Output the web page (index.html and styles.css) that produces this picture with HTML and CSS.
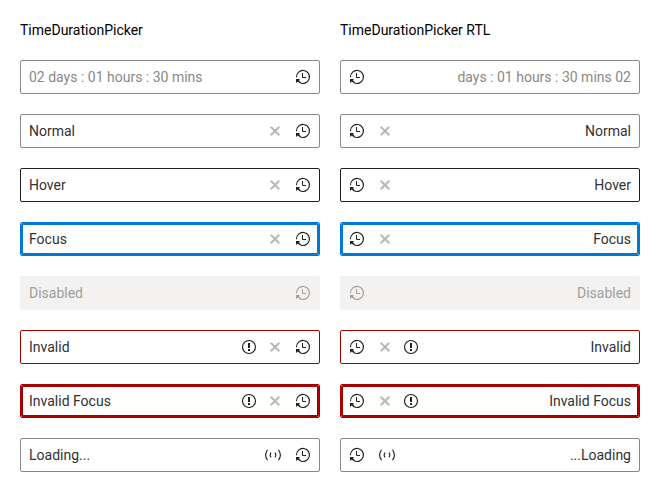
FILE: index.html
```
<!DOCTYPE html>
<html lang="en">
<head>
<meta charset="utf-8">
<title>TimeDurationPicker</title>
<link rel="stylesheet" href="styles.css">
</head>
<body>
<svg class="sprite" aria-hidden="true">
  <symbol id="clock" viewBox="0 0 16 16">
    <path d="M1.500 8.300A6.500 6.500 0 1 1 4.600 13.500" fill="none" stroke="currentColor" stroke-width="1.150"/>
    <path d="M7.500 4v4.500H11" fill="none" stroke="currentColor" stroke-width="1"/>
    <path d="M1 10h4L3.900 11.300 5.600 13 4.700 14 2.700 12.400 1 14z" fill="currentColor"/>
  </symbol>
  <symbol id="clear" viewBox="0 0 16 16">
    <path d="M3.700 3.700l8.600 8.600M12.300 3.700l-8.600 8.600" fill="none" stroke="currentColor" stroke-width="2"/>
  </symbol>
  <symbol id="alert" viewBox="0 0 16 16">
    <circle cx="8" cy="8" r="6.500" fill="none" stroke="currentColor" stroke-width="1.150"/>
    <path d="M7 4h2v5H7zM7 10h2v2H7z" fill="currentColor"/>
  </symbol>
  <symbol id="loading" viewBox="0 0 16 16">
    <path d="M2.500 2.700Q-1.300 8 2.500 13.300M13.500 2.700Q17.300 8 13.500 13.300M6.100 5.600C5 7 5 9 6.100 10.400M9.900 5.600C11 7 11 9 9.900 10.400" fill="none" stroke="currentColor" stroke-width="1.100"/>
  </symbol>
</svg>
<main class="columns">
  <section class="column">
    <h2 class="title">TimeDurationPicker</h2>
    <div class="picker placeholder"><span class="value">02 days : 01 hours : 30 mins</span><svg class="icon"><use href="#clock"/></svg></div>
    <div class="picker"><span class="value">Normal</span><svg class="icon clear"><use href="#clear"/></svg><svg class="icon"><use href="#clock"/></svg></div>
    <div class="picker hover"><span class="value">Hover</span><svg class="icon clear"><use href="#clear"/></svg><svg class="icon"><use href="#clock"/></svg></div>
    <div class="picker focus"><span class="value">Focus</span><svg class="icon clear"><use href="#clear"/></svg><svg class="icon"><use href="#clock"/></svg></div>
    <div class="picker disabled"><span class="value">Disabled</span><svg class="icon"><use href="#clock"/></svg></div>
    <div class="picker invalid"><span class="value">Invalid</span><svg class="icon alert"><use href="#alert"/></svg><svg class="icon clear"><use href="#clear"/></svg><svg class="icon"><use href="#clock"/></svg></div>
    <div class="picker focus invalid"><span class="value">Invalid Focus</span><svg class="icon alert"><use href="#alert"/></svg><svg class="icon clear"><use href="#clear"/></svg><svg class="icon"><use href="#clock"/></svg></div>
    <div class="picker"><span class="value">Loading...</span><svg class="icon loading"><use href="#loading"/></svg><svg class="icon"><use href="#clock"/></svg></div>
  </section>
  <section class="column">
    <h2 class="title">TimeDurationPicker RTL</h2>
    <div class="picker placeholder" dir="rtl"><span class="value">02 days : 01 hours : 30 mins</span><svg class="icon"><use href="#clock"/></svg></div>
    <div class="picker" dir="rtl"><span class="value">Normal</span><svg class="icon clear"><use href="#clear"/></svg><svg class="icon"><use href="#clock"/></svg></div>
    <div class="picker hover" dir="rtl"><span class="value">Hover</span><svg class="icon clear"><use href="#clear"/></svg><svg class="icon"><use href="#clock"/></svg></div>
    <div class="picker focus" dir="rtl"><span class="value">Focus</span><svg class="icon clear"><use href="#clear"/></svg><svg class="icon"><use href="#clock"/></svg></div>
    <div class="picker disabled" dir="rtl"><span class="value">Disabled</span><svg class="icon"><use href="#clock"/></svg></div>
    <div class="picker invalid" dir="rtl"><span class="value">Invalid</span><svg class="icon alert"><use href="#alert"/></svg><svg class="icon clear"><use href="#clear"/></svg><svg class="icon"><use href="#clock"/></svg></div>
    <div class="picker focus invalid" dir="rtl"><span class="value">Invalid Focus</span><svg class="icon alert"><use href="#alert"/></svg><svg class="icon clear"><use href="#clear"/></svg><svg class="icon"><use href="#clock"/></svg></div>
    <div class="picker" dir="rtl"><span class="value">Loading...</span><svg class="icon loading"><use href="#loading"/></svg><svg class="icon"><use href="#clock"/></svg></div>
  </section>
</main>
</body>
</html>
```
FILE: styles.css
```
* {
  box-sizing: border-box;
}

body {
  margin: 0;
  padding: 20px;
  background: #fff;
  color: #000;
  font: 14px/20px Roboto, sans-serif;
}

.sprite {
  display: none;
}

.columns {
  display: grid;
  grid-template-columns: 300px 300px;
  gap: 20px;
}

.column {
  display: flex;
  flex-direction: column;
  gap: 20px;
}

.title {
  margin: 0;
  font-size: 14px;
  font-weight: 400;
}

.picker {
  --line: #8a8886;
  position: relative;
  display: flex;
  align-items: center;
  height: 34px;
  padding: 0 8px;
  border: 1px solid var(--line);
  border-radius: 2px;
  color: #323130;
}

.value {
  flex: 1;
}

.icon {
  flex: none;
  width: 16px;
  height: 16px;
  color: #201f1e;
}

.icon.alert {
  margin-inline-end: 10px;
}

.icon.clear {
  margin-inline-end: 12px;
  color: #b9b8b7;
}

.icon.loading {
  margin-inline-end: 14px;
}

.placeholder .value {
  color: #8a8886;
}

.hover {
  --line: #201f1e;
}

.focus {
  --line: #0078d4;
}

/* Inner focus ring, rounded so the corners stay light */
.focus::after {
  content: "";
  position: absolute;
  inset: 0;
  border: 2px solid var(--line);
  border-radius: 2px;
  pointer-events: none;
}

.invalid {
  --line: #a80000;
}

.disabled {
  --line: #f3f2f1;
  background: #f3f2f1;
}

.disabled .value,
.disabled .icon {
  color: #a19f9d;
}
```
